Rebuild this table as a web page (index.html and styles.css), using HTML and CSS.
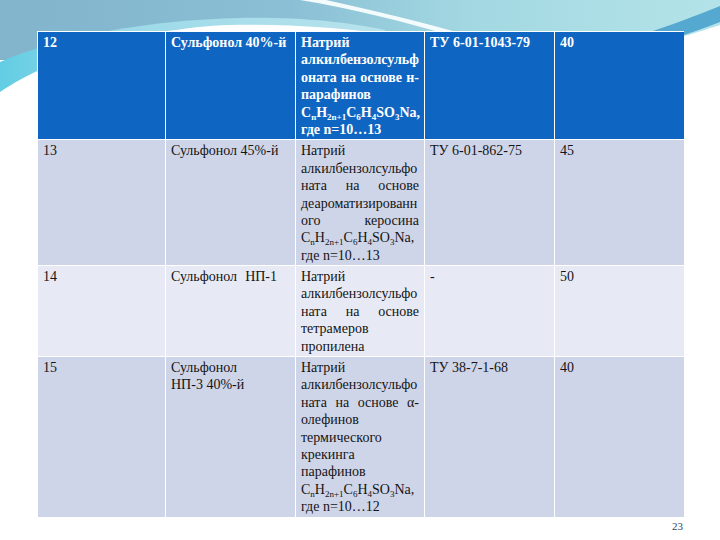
FILE: index.html
```
<!DOCTYPE html>
<html>
<head>
<meta charset="utf-8">
<title>Table 23</title>
<link rel="stylesheet" href="styles.css">
</head>
<body>
<div class="backdrop">
  <svg viewBox="0 0 720 540" width="720" height="540">
    <defs>
      <linearGradient id="sky" x1="0" y1="0" x2="1" y2="0">
        <stop offset="0" stop-color="#82b4cc"/>
        <stop offset="0.4" stop-color="#8abfd5"/>
        <stop offset="0.65" stop-color="#a3d8e2"/>
        <stop offset="1" stop-color="#b3e3e8"/>
      </linearGradient>
      <linearGradient id="cyan" x1="0" y1="0" x2="1" y2="0">
        <stop offset="0" stop-color="#62cde4"/>
        <stop offset="0.3" stop-color="#9bd9e8"/>
        <stop offset="1" stop-color="#b8e3ec"/>
      </linearGradient>
    </defs>
    <rect width="720" height="540" fill="#ffffff"/>
    <rect width="720" height="60" fill="url(#sky)"/>
    <path d="M0 62 C 60 36 150 20 240 18 C 300 17 345 22 385 30 L385 120 L0 120 Z" fill="url(#cyan)"/>
    <path d="M0 92 C 50 58 140 28 230 25 C 290 24 340 28 385 34 L385 540 L0 540 Z" fill="#ffffff"/>
    <path d="M300 0 L326 0 C 380 12 430 24 470 36 L452 36 C 405 22 355 9 300 0 Z" fill="#f4fbfc"/>
    <path d="M610 44 C 655 32 695 16 720 6 L720 22 C 700 30 675 38 650 46 Z" fill="#55a9d0"/>
    <path d="M640 48 C 680 38 705 30 720 25 L720 540 L640 540 Z" fill="#ffffff"/>
  </svg>
</div>

<div class="page">
  <div class="grid">
    <div class="row row-head">
      <div class="cell"><p class="ln">12</p></div>
      <div class="cell"><p class="ln">Сульфонол 40%-й</p></div>
      <div class="cell">
        <p class="ln">Натрий</p>
        <p class="ln j">алкилбензолсульф</p>
        <p class="ln j">оната на основе н-</p>
        <p class="ln">парафинов</p>
        <p class="ln j">C<span class="sub">n</span>H<span class="sub">2n+1</span>C<span class="sub">6</span>H<span class="sub">4</span>SO<span class="sub">3</span>Na,</p>
        <p class="ln">где n=10…13</p>
      </div>
      <div class="cell"><p class="ln">ТУ 6-01-1043-79</p></div>
      <div class="cell"><p class="ln">40</p></div>
    </div>
    <div class="row row-dark">
      <div class="cell"><p class="ln">13</p></div>
      <div class="cell"><p class="ln">Сульфонол 45%-й</p></div>
      <div class="cell">
        <p class="ln">Натрий</p>
        <p class="ln j">алкилбензолсульфо</p>
        <p class="ln j">ната на основе</p>
        <p class="ln j">деароматизированн</p>
        <p class="ln j">ого керосина</p>
        <p class="ln j">C<span class="sub">n</span>H<span class="sub">2n+1</span>C<span class="sub">6</span>H<span class="sub">4</span>SO<span class="sub">3</span>Na,</p>
        <p class="ln">где n=10…13</p>
      </div>
      <div class="cell"><p class="ln">ТУ 6-01-862-75</p></div>
      <div class="cell"><p class="ln">45</p></div>
    </div>
    <div class="row row-light">
      <div class="cell"><p class="ln">14</p></div>
      <div class="cell"><p class="ln"><span class="gap">Сульфонол</span>НП-1</p></div>
      <div class="cell">
        <p class="ln">Натрий</p>
        <p class="ln j">алкилбензолсульфо</p>
        <p class="ln j">ната на основе</p>
        <p class="ln">тетрамеров</p>
        <p class="ln">пропилена</p>
      </div>
      <div class="cell"><p class="ln">-</p></div>
      <div class="cell"><p class="ln">50</p></div>
    </div>
    <div class="row row-dark">
      <div class="cell"><p class="ln">15</p></div>
      <div class="cell">
        <p class="ln">Сульфонол</p>
        <p class="ln">НП-3 40%-й</p>
      </div>
      <div class="cell">
        <p class="ln">Натрий</p>
        <p class="ln j">алкилбензолсульфо</p>
        <p class="ln j">ната на основе α-</p>
        <p class="ln">олефинов</p>
        <p class="ln">термического</p>
        <p class="ln">крекинга</p>
        <p class="ln">парафинов</p>
        <p class="ln j">C<span class="sub">n</span>H<span class="sub">2n+1</span>C<span class="sub">6</span>H<span class="sub">4</span>SO<span class="sub">3</span>Na,</p>
        <p class="ln">где n=10…12</p>
      </div>
      <div class="cell"><p class="ln">ТУ 38-7-1-68</p></div>
      <div class="cell"><p class="ln">40</p></div>
    </div>
  </div>
  <p class="page-num">23</p>
</div>
</body>
</html>
```

FILE: styles.css
```
body {
  margin: 0;
  font-size: 14px;
  color: #141414;
  background: #ffffff;
}

.backdrop {
  position: absolute;
  left: 0;
  top: 0;
  width: 720px;
  height: 540px;
}

.backdrop svg {
  display: block;
}

.page {
  position: relative;
  padding: 31px 0 0 37px;
  width: 647px;
}

.grid {
  width: 647px;
  border-top: 1px solid #ffffff;
}

.row {
  display: grid;
  grid-template-columns: 128px 130px 129px 130px 130px;
  border-bottom: 1px solid #ffffff;
}

.row-head {
  background: #0f66c2;
  color: #ffffff;
  font-weight: bold;
}

.row-dark {
  background: #cfd5e9;
}

.row-light {
  background: #e7eaf4;
}

.cell {
  padding: 2px 5px 1px 5px;
  border-left: 1px solid #ffffff;
  min-width: 0;
}

.ln {
  margin: 0;
  height: 17.4px;
  padding-top: 1px;
  box-sizing: border-box;
  font-family: "Liberation Serif", serif;
  font-size: 14px;
  white-space: nowrap;
}

.j {
  text-align: justify;
  text-align-last: justify;
}

.sub {
  font-size: 9px;
  position: relative;
  top: 3px;
}

.gap {
  margin-right: 8px;
}

.page-num {
  margin: 0;
  text-align: right;
  font-family: "Liberation Serif", serif;
  font-size: 11px;
  color: #2b4a63;
  padding-top: 2px;
  padding-right: 1px;
}
```
